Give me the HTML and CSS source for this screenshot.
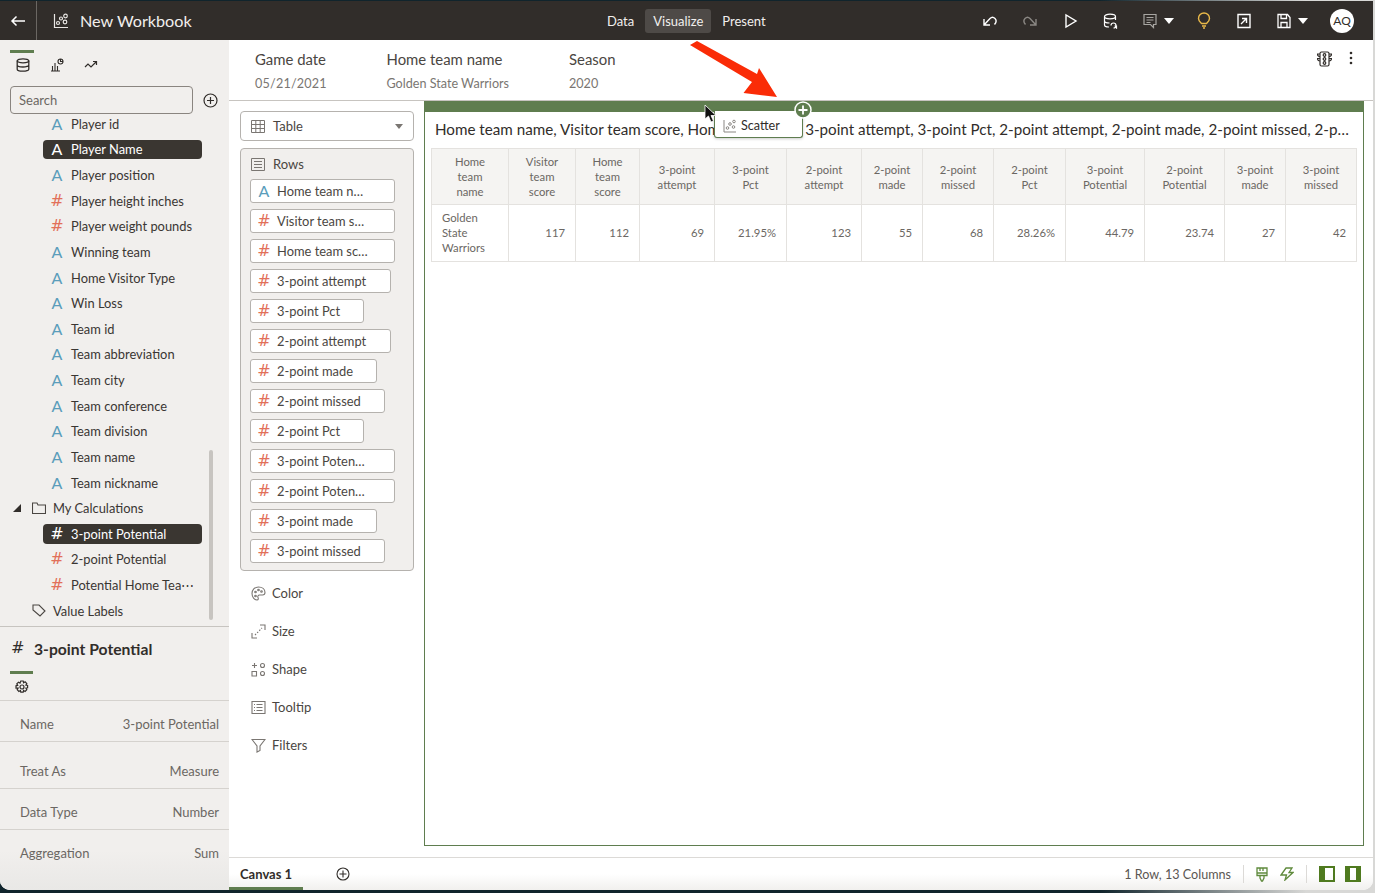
FILE: index.html
```html
<!DOCTYPE html>
<html lang="en">
<head>
  <meta charset="UTF-8" />
  <title>New Workbook</title>
  <link rel="stylesheet" href="styles.css">
</head>
<body>
<div class="window">
  <header class="topbar">
    <div class="back">
      <svg width="16" height="12" viewBox="0 0 16 12" fill="none" stroke="#fff" stroke-width="1.5"><path d="M15 6H2M6.500 1.500 2 6l4.500 4.500"/></svg>
    </div>
    <svg class="wb-icon" width="16" height="16" viewBox="0 0 16 16" fill="none" stroke="#e8e6e3" stroke-width="1.2"><path d="M1.500 1v13.500H15"/><circle cx="5" cy="10" r="1.500"/><circle cx="8" cy="5.500" r="1.500"/><circle cx="12.500" cy="3" r="1.800"/><circle cx="12" cy="9" r="1.800"/></svg>
    <span class="wb-title">New Workbook</span>
    <nav class="modes">
      <span class="mode">Data</span>
      <span class="mode mode-on">Visualize</span>
      <span class="mode">Present</span>
    </nav>
    <div class="tools">
      <svg width="16" height="16" viewBox="0 0 16 16" fill="none" stroke="#fff" stroke-width="1.400"><path d="M2 6v6h6M2.500 11.500 8 5.500c1.500-1.500 3.500-1.500 5 0s1.200 4-.5 6"/></svg>
      <svg width="16" height="16" viewBox="0 0 16 16" fill="none" stroke="#8a8783" stroke-width="1.400"><path d="M14 6v6H8M13.500 11.500 8 5.500C6.500 4 4.500 4 3 5.500s-1.200 4 .5 6"/></svg>
      <svg width="16" height="16" viewBox="0 0 16 16" fill="none" stroke="#fff" stroke-width="1.400"><path d="M4 2v12l10-6z"/></svg>
      <svg width="16" height="16" viewBox="0 0 16 16" fill="none" stroke="#fff" stroke-width="1.200"><ellipse cx="8" cy="3.500" rx="5.500" ry="2.300"/><path d="M2.500 3.500V12c0 1.200 2 2 4.500 2M13.500 3.500V7M2.500 8c0 1.200 2.500 2 5 2"/><path d="M9 12.500a2.500 2.500 0 1 1 2.500 2.500M13.500 14l1 1v-2h-2"/></svg>
      <span class="tool-group tool-comment">
        <svg width="16" height="16" viewBox="0 0 16 16" fill="none" stroke="#a8a6a2" stroke-width="1.200"><path d="M2 1.500h12v10h-2.500v3l-3-3H2zM4.500 4.500h7M4.500 7h7M4.500 9.500h4"/></svg>
        <i class="caret-w"></i>
      </span>
      <svg width="16" height="17" viewBox="0 0 16 17" fill="none" stroke="#e9b949" stroke-width="1.400"><path d="M5.500 11.500C4 10 2.500 8.800 2.500 6.500a5.500 5.500 0 0 1 11 0c0 2.300-1.500 3.500-3 5zM6 14h4M7 16h2"/></svg>
      <svg width="16" height="16" viewBox="0 0 16 16" fill="none" stroke="#fff" stroke-width="1.400"><path d="M2 1.500h12v13H2zM5 11l5.500-5.500M6 5.500h4.500V10"/></svg>
      <span class="tool-group tool-save">
        <svg width="16" height="16" viewBox="0 0 16 16" fill="none" stroke="#fff" stroke-width="1.300"><path d="M2 1.500h9.500l2.500 3v10H2zM5 1.500v4h5.500v-4M5 14.500v-5h6v5"/></svg>
        <i class="caret-w"></i>
      </span>
      <span class="avatar">AQ</span>
    </div>
  </header>

  <div class="main">
    <aside class="sidebar">
      <div class="side-tabs">
        <span class="side-tab side-tab-on">
          <svg width="14" height="14" viewBox="0 0 14 14" fill="none" stroke="#312d2a" stroke-width="1.300"><ellipse cx="7" cy="2.800" rx="5.800" ry="2"/><path d="M1.200 2.800v8.400c0 1.100 2.600 2 5.800 2s5.800-.9 5.800-2V2.800M1.200 7c0 1.100 2.600 2 5.800 2s5.800-.9 5.800-2"/></svg>
        </span>
        <span class="side-tab">
          <svg width="14" height="14" viewBox="0 0 14 14" fill="none" stroke="#312d2a" stroke-width="1.100"><path d="M1 13h9M2.500 13V8M5 13V5M7.500 13V8"/><circle cx="10.500" cy="3.500" r="2.500"/><path d="M10.500 1v2.500H13"/></svg>
        </span>
        <span class="side-tab">
          <svg width="14" height="14" viewBox="0 0 14 14" fill="none" stroke="#312d2a" stroke-width="1.200"><path d="M1 9l3-3 3 3 5-5M9 3.500h3.500V7"/></svg>
        </span>
      </div>
      <div class="search-row">
        <div class="search">Search</div>
        <svg width="15" height="15" viewBox="0 0 15 15" fill="none" stroke="#312d2a" stroke-width="1.200"><circle cx="7.500" cy="7.500" r="6.500"/><path d="M7.500 4v7M4 7.500h7"/></svg>
      </div>
      <div class="field-list">
        <div class="field"><span class="ico-a">A</span><span class="field-name">Player id</span></div>
        <div class="field field-sel"><span class="ico-a">A</span><span class="field-name">Player Name</span></div>
        <div class="field"><span class="ico-a">A</span><span class="field-name">Player position</span></div>
        <div class="field"><span class="ico-h">#</span><span class="field-name">Player height inches</span></div>
        <div class="field"><span class="ico-h">#</span><span class="field-name">Player weight pounds</span></div>
        <div class="field"><span class="ico-a">A</span><span class="field-name">Winning team</span></div>
        <div class="field"><span class="ico-a">A</span><span class="field-name">Home Visitor Type</span></div>
        <div class="field"><span class="ico-a">A</span><span class="field-name">Win Loss</span></div>
        <div class="field"><span class="ico-a">A</span><span class="field-name">Team id</span></div>
        <div class="field"><span class="ico-a">A</span><span class="field-name">Team abbreviation</span></div>
        <div class="field"><span class="ico-a">A</span><span class="field-name">Team city</span></div>
        <div class="field"><span class="ico-a">A</span><span class="field-name">Team conference</span></div>
        <div class="field"><span class="ico-a">A</span><span class="field-name">Team division</span></div>
        <div class="field"><span class="ico-a">A</span><span class="field-name">Team name</span></div>
        <div class="field"><span class="ico-a">A</span><span class="field-name">Team nickname</span></div>
        <div class="folder">
          <i class="tree-caret"></i>
          <svg width="14" height="12" viewBox="0 0 14 12" fill="none" stroke="#4a4642" stroke-width="1.100"><path d="M.5 1h4.500l1 2h7.500v8.500H.5z"/></svg>
          <span>My Calculations</span>
        </div>
        <div class="field field-sel"><span class="ico-h">#</span><span class="field-name">3-point Potential</span></div>
        <div class="field"><span class="ico-h">#</span><span class="field-name">2-point Potential</span></div>
        <div class="field"><span class="ico-h">#</span><span class="field-name">Potential Home Tea&#8943;</span></div>
        <div class="folder">
          <i class="tree-blank"></i>
          <svg width="14" height="13" viewBox="0 0 14 13" fill="none" stroke="#4a4642" stroke-width="1.100"><path d="M1 1h6l6 6-5 5-7-6z"/></svg>
          <span>Value Labels</span>
        </div>
        <div class="list-scroll"></div>
      </div>
      <div class="props">
        <div class="props-title"><span class="props-hash">#</span><span>3-point Potential</span></div>
        <div class="props-tab">
          <svg width="14" height="14" viewBox="0 0 14 14" fill="none" stroke="#312d2a" stroke-width="1.200"><circle cx="7" cy="7" r="2"/><path d="M5.800 1h2.400l.4 1.700 1.500-.9 1.700 1.700-.9 1.500 1.700.4v2.400l-1.700.4.900 1.500-1.700 1.700-1.500-.9-.4 1.700H5.800l-.4-1.700-1.500.9-1.700-1.700.9-1.500L1 8.200V5.800l1.700-.4-.9-1.500 1.700-1.700 1.500.9z"/></svg>
        </div>
        <div class="prop"><span>Name</span><span>3-point Potential</span></div>
        <div class="prop prop-treat"><span>Treat As</span><span>Measure</span></div>
        <div class="prop"><span>Data Type</span><span>Number</span></div>
        <div class="prop prop-last"><span>Aggregation</span><span>Sum</span></div>
      </div>
    </aside>

    <section class="content">
      <div class="filter-bar">
        <div class="filter filter-date"><div class="filter-label">Game date</div><div class="filter-value">05/21/2021</div></div>
        <div class="filter filter-team"><div class="filter-label">Home team name</div><div class="filter-value">Golden State Warriors</div></div>
        <div class="filter"><div class="filter-label">Season</div><div class="filter-value">2020</div></div>
        <div class="filter-tools">
          <svg width="15" height="16" viewBox="0 0 15 16" fill="none" stroke="#312d2a" stroke-width="1.200"><rect x="3" y="1" width="9" height="14" rx="1.500"/><path d="M3 3H.5c0 1.500 1 2.500 2.500 2.500M12 3h2.500c0 1.500-1 2.500-2.500 2.500M3 7.500H.5c0 1.500 1 2.500 2.500 2.500M12 7.500h2.500c0 1.500-1 2.500-2.500 2.500"/><circle cx="7.500" cy="4" r="1.300"/><circle cx="7.500" cy="8" r="1.300"/><circle cx="7.500" cy="12" r="1.300"/></svg>
          <svg width="4" height="14" viewBox="0 0 4 14" fill="#312d2a"><circle cx="2" cy="2" r="1.300"/><circle cx="2" cy="7" r="1.300"/><circle cx="2" cy="12" r="1.300"/></svg>
        </div>
      </div>

      <div class="work">
        <div class="grammar">
          <div class="viz-select">
            <svg width="14" height="13" viewBox="0 0 14 13" fill="none" stroke="#7a7672" stroke-width="1"><path d="M.5.500h13v12H.5zM.5 4.500h13M.5 8.500h13M4.800.500v12M9.200.500v12"/></svg>
            <span>Table</span>
            <i class="caret-g"></i>
          </div>
          <div class="rows-box">
            <div class="rows-head">
              <svg width="14" height="13" viewBox="0 0 14 13" fill="none" stroke="#7a7672" stroke-width="1"><path d="M.5.500h13v12H.5zM3 3.500h8M3 6.500h8M3 9.500h8"/></svg>
              <span>Rows</span>
            </div>
            <div class="pill pill-l"><span class="ico-a">A</span>Home team n&#8230;</div>
            <div class="pill pill-l"><span class="ico-h">#</span>Visitor team s&#8230;</div>
            <div class="pill pill-l"><span class="ico-h">#</span>Home team sc&#8230;</div>
            <div class="pill pill-m"><span class="ico-h">#</span>3-point attempt</div>
            <div class="pill pill-xs"><span class="ico-h">#</span>3-point Pct</div>
            <div class="pill pill-m"><span class="ico-h">#</span>2-point attempt</div>
            <div class="pill pill-s"><span class="ico-h">#</span>2-point made</div>
            <div class="pill pill-n"><span class="ico-h">#</span>2-point missed</div>
            <div class="pill pill-xs"><span class="ico-h">#</span>2-point Pct</div>
            <div class="pill pill-l"><span class="ico-h">#</span>3-point Poten&#8230;</div>
            <div class="pill pill-l"><span class="ico-h">#</span>2-point Poten&#8230;</div>
            <div class="pill pill-s"><span class="ico-h">#</span>3-point made</div>
            <div class="pill pill-n"><span class="ico-h">#</span>3-point missed</div>
          </div>
          <div class="slot">
            <svg width="15" height="15" viewBox="0 0 15 15" fill="none" stroke="#7a7672" stroke-width="1.100"><path d="M7.500 1C3.500 1 1 4 1 7.500S3.500 14 6 14c1.500 0 1.500-1.500 1-2.500s0-2.500 1.500-2.500h3c1.500 0 2.500-1 2.500-2.500C14 3 11 1 7.500 1z"/><circle cx="4.500" cy="6" r=".8"/><circle cx="7.500" cy="4" r=".8"/><circle cx="10.500" cy="5.500" r=".8"/><circle cx="4.500" cy="10" r=".8"/></svg>
            <span>Color</span>
          </div>
          <div class="slot">
            <svg width="15" height="15" viewBox="0 0 15 15" fill="none" stroke="#7a7672" stroke-width="1.100"><path d="M1 9v5h5M9 1h5v5" /><path d="M4 11l7-7" stroke-dasharray="1.500 1.500"/></svg>
            <span>Size</span>
          </div>
          <div class="slot">
            <svg width="15" height="15" viewBox="0 0 15 15" fill="none" stroke="#7a7672" stroke-width="1.100"><path d="M3.500 1v5M1 3.500h5M1 9.500h4.500V14H1z"/><circle cx="11.500" cy="3.500" r="2"/><circle cx="11.500" cy="11.500" r="2"/></svg>
            <span>Shape</span>
          </div>
          <div class="slot">
            <svg width="15" height="15" viewBox="0 0 15 15" fill="none" stroke="#7a7672" stroke-width="1.100"><path d="M1 1.500h13v12H1zM5.500 4.500h6M5.500 7.500h6M5.500 10.500h6M3 4.500h1M3 7.500h1M3 10.500h1"/></svg>
            <span>Tooltip</span>
          </div>
          <div class="slot">
            <svg width="15" height="15" viewBox="0 0 15 15" fill="none" stroke="#7a7672" stroke-width="1.100"><path d="M1 1.500h13L9 8v4.500L6 14V8z"/></svg>
            <span>Filters</span>
          </div>
        </div>

        <div class="canvas-wrap">
          <div class="viz">
            <div class="viz-bar"></div>
            <div class="viz-title">Home team name, Visitor team score, Hom<span class="title-tuck">e team score, </span>3-point attempt, 3-point Pct, 2-point attempt, 2-point made, 2-point missed, 2-p&#8230;</div>
            <table class="data-table">
              <colgroup>
                <col class="c1"><col class="c2"><col class="c3"><col class="c4"><col class="c5"><col class="c6"><col class="c7"><col class="c8"><col class="c9"><col class="c10"><col class="c11"><col class="c12"><col class="c13">
              </colgroup>
              <thead>
                <tr>
                  <th>Home<br>team<br>name</th><th>Visitor<br>team<br>score</th><th>Home<br>team<br>score</th><th>3-point<br>attempt</th><th>3-point<br>Pct</th><th>2-point<br>attempt</th><th>2-point<br>made</th><th>2-point<br>missed</th><th>2-point<br>Pct</th><th>3-point<br>Potential</th><th>2-point<br>Potential</th><th>3-point<br>made</th><th>3-point<br>missed</th>
                </tr>
              </thead>
              <tbody>
                <tr>
                  <td class="txt">Golden<br>State<br>Warriors</td><td>117</td><td>112</td><td>69</td><td>21.95%</td><td>123</td><td>55</td><td>68</td><td>28.26%</td><td>44.79</td><td>23.74</td><td>27</td><td>42</td>
                </tr>
              </tbody>
            </table>
          </div>
        </div>
      </div>

      <footer class="footer">
        <div class="canvas-tab">Canvas 1</div>
        <svg class="add-canvas" width="14" height="14" viewBox="0 0 14 14" fill="none" stroke="#312d2a" stroke-width="1.100"><circle cx="7" cy="7" r="6"/><path d="M7 3.500v7M3.500 7h7"/></svg>
        <div class="foot-right">
          <span class="foot-count">1 Row, 13 Columns</span>
          <span class="foot-sep"></span>
          <svg width="12" height="15" viewBox="1 0 12 15" fill="none" stroke="#5f8a3c" stroke-width="1.300"><path d="M2 1h10v7.500H2zM2 6h10M5 1v3M8 1v3M5 8.500V11l1.500 3h1L9 11V8.500"/></svg>
          <svg width="14" height="14" viewBox="0 0 14 14" fill="none" stroke="#5f8a3c" stroke-width="1.300"><path d="M6 1h6L9 5.500h4L5 13l1.500-5H1z"/></svg>
          <span class="foot-sep"></span>
          <span class="panel-btn panel-left"></span>
          <span class="panel-btn panel-mid"></span>
        </div>
      </footer>
    </section>
  </div>

  <svg class="red-arrow" width="90" height="60" viewBox="0 0 90 60"><path d="M8 1 68 34 70 28 88 57 54.500 53 63 42 1 5z" fill="#fa2c07"/></svg>
  <div class="drag-tip">
    <svg width="14" height="14" viewBox="0 0 14 14" fill="none" stroke="#8a8783" stroke-width="1"><path d="M1 1v12h12"/><circle cx="4.500" cy="9" r="1.300"/><circle cx="7" cy="5" r="1.300"/><circle cx="11" cy="2.500" r="1.300"/><circle cx="10.500" cy="8" r="1.300"/></svg>
    <span>Scatter</span>
  </div>
  <svg class="drop-plus" width="18" height="18" viewBox="0 0 18 18"><circle cx="9" cy="9" r="8" fill="#5f7d4f" stroke="#fff" stroke-width="1.500"/><path d="M9 4.500v9M4.500 9h9" stroke="#fff" stroke-width="1.800"/></svg>
  <svg class="cursor" width="13" height="19" viewBox="0 0 13 19"><path d="M1 1v14l3.500-3 2.500 6 2.500-1-2.500-5.500H12z" fill="#111" stroke="#fff" stroke-width=".8"/></svg>
</div>
</body>
</html>
```

FILE: styles.css
```css
* {
  box-sizing: border-box;
}

html, body {
  margin: 0;
  height: 100%;
}

body {
  background: linear-gradient(90deg, #10242c 80%, #d8d8d6 95%);
  font-family: Lato, "Noto Sans", sans-serif;
  color: #312d2a;
  overflow: hidden;
}

.window {
  position: relative;
  width: 1373px;
  height: 889px;
  margin-top: 1px;
  background: #fff;
  border-radius: 0 0 10px 10px;
  overflow: hidden;
}

/* top bar */
.topbar {
  height: 39px;
  background: #312d2a;
  color: #fff;
  display: flex;
  align-items: center;
}

.back {
  width: 37px;
  height: 39px;
  border-right: 1px solid #6b6763;
  display: flex;
  align-items: center;
  justify-content: center;
}

.wb-icon {
  margin-left: 16px;
}

.wb-title {
  margin-left: 11px;
  font-size: 16.200px;
  color: #f1efed;
  width: 200px;
}

.modes {
  display: flex;
  margin-left: 319px;
  gap: 3px;
}

.mode {
  font-size: 13px;
  height: 24px;
  line-height: 24px;
  padding: 0 8px;
  border-radius: 3px;
  color: #f1efed;
}

.mode-on {
  background: #4e4a47;
}

.tools {
  margin-left: auto;
  margin-right: 19px;
  display: flex;
  align-items: center;
  gap: 24px;
}

.tool-group {
  display: flex;
  align-items: center;
  gap: 6px;
}

.tool-comment,
.tool-save {
  margin-right: -2px;
}

.caret-w {
  width: 0;
  height: 0;
  border-left: 5px solid transparent;
  border-right: 5px solid transparent;
  border-top: 6px solid #fff;
}

.avatar {
  width: 24px;
  height: 24px;
  border-radius: 50%;
  background: #fff;
  color: #312d2a;
  font-size: 12px;
  text-align: center;
  line-height: 24px;
}

.main {
  display: flex;
  height: 850px;
}

/* left panel */
.sidebar {
  width: 229px;
  background: #f1efed;
  display: flex;
  flex-direction: column;
  flex-shrink: 0;
}

.side-tabs {
  display: flex;
  padding: 10px 0 0 10px;
  gap: 10px;
  height: 46px;
}

.side-tab {
  width: 24px;
  height: 28px;
  border-top: 3px solid transparent;
  display: flex;
  justify-content: center;
  padding: 5px 0 0 2px;
}

.side-tab-on {
  border-top-color: #5f7d4f;
}

.search-row {
  display: flex;
  align-items: center;
  padding-left: 10px;
  gap: 10px;
  height: 28px;
}

.search {
  width: 183px;
  height: 28px;
  border: 1px solid #8a8580;
  border-radius: 4px;
  font-size: 13px;
  line-height: 26px;
  padding-left: 8px;
  color: #6b6763;
}

.field-list {
  position: relative;
  height: 512px;
  overflow: hidden;
}

/* the list is scrolled a little in the shot */
.field:first-child {
  margin-top: -3px;
}

.field {
  height: 25.630px;
  margin-left: 43px;
  width: 159px;
  display: flex;
  align-items: center;
  font-size: 12.900px;
  color: #3a3633;
}

.field-sel .field-name {
  color: #fff;
}

.field-sel {
  position: relative;
  color: #fff;
  z-index: 0;
}

.field-sel::before {
  content: "";
  position: absolute;
  inset: 3px 0;
  background: #3a3631;
  border-radius: 4px;
  z-index: -1;
}

.field-sel .ico-a, .field-sel .ico-h {
  color: #fff;
}

.ico-a, .ico-h {
  width: 28px;
  text-align: center;
  flex-shrink: 0;
  line-height: 1;
}

.ico-a {
  font-size: 16px;
  color: #5b9dbb;
}

.ico-h {
  font-family: "DejaVu Sans", sans-serif;
  font-size: 16px;
  color: #e2705a;
}

.folder {
  height: 25.630px;
  display: flex;
  align-items: center;
  padding-left: 13px;
  font-size: 12.900px;
  color: #3a3633;
}

.folder span {
  margin-left: 7px;
}

.tree-caret {
  width: 0;
  height: 0;
  border-left: 8px solid transparent;
  border-bottom: 8px solid #312d2a;
  margin-right: 11px;
}

.tree-blank {
  width: 8px;
  margin-right: 11px;
}

.list-scroll {
  position: absolute;
  left: 209px;
  top: 336px;
  width: 4px;
  height: 170px;
  background: #c7c4c0;
  border-radius: 2px;
}

.props {
  flex: 1;
  border-top: 1px solid #c7c4c0;
  background: linear-gradient(#f1efed 85%, #e9e8e6);
}

.props-title {
  height: 44px;
  display: flex;
  align-items: center;
  font-size: 15.700px;
  font-weight: 700;
  padding: 0 0 0 11px;
}

.props-hash {
  width: 23px;
  font-family: "DejaVu Sans", sans-serif;
  font-size: 16px;
  margin-top: -3px;
  font-weight: 400;
}

.props-tab {
  width: 23px;
  margin-left: 10px;
  height: 29px;
  border-top: 3px solid #5f7d4f;
  display: flex;
  justify-content: center;
  padding-top: 6px;
}

.prop {
  display: flex;
  justify-content: space-between;
  align-items: center;
  padding: 6px 10px 0 20px;
  height: 41px;
  font-size: 13px;
  color: #6b6763;
  border-top: 1px solid #d5d2ce;
}

.prop-treat {
  height: 47px;
  padding-top: 12px;
}

.prop-last {
  height: 46px;
  padding-top: 0;
}

/* content area */
.content {
  flex: 1;
  display: flex;
  flex-direction: column;
  min-width: 0;
}

.filter-bar {
  height: 61px;
  border-bottom: 1px solid #c7c4c0;
  display: flex;
  padding-left: 26px;
  flex-shrink: 0;
}

.filter {
  padding-top: 10px;
}

.filter-date {
  width: 131.500px;
}

.filter-date .filter-value {
  letter-spacing: .2px;
}

.filter-team {
  width: 182.500px;
}

.filter-label {
  font-size: 14.900px;
  color: #4a4642;
  line-height: 18px;
}

.filter-value {
  font-size: 12.600px;
  color: #7a7672;
  margin-top: 8px;
}

.filter-tools {
  margin-left: auto;
  margin-right: 20px;
  padding-top: 11px;
  display: flex;
  gap: 17px;
  align-items: flex-start;
}

.work {
  flex: 1;
  display: flex;
  min-height: 0;
}

.grammar {
  width: 195px;
  padding: 10px 10px 0 11px;
  flex-shrink: 0;
}

.viz-select {
  height: 30px;
  border: 1px solid #b5b2ae;
  border-radius: 4px;
  display: flex;
  align-items: center;
  padding-left: 10px;
  font-size: 13px;
  color: #4a4642;
  gap: 8px;
}

.caret-g {
  margin-left: auto;
  margin-right: 10px;
  border-left: 4px solid transparent;
  border-right: 4px solid transparent;
  border-top: 5px solid #7a7672;
}

.rows-box {
  margin: 7px 0 3px;
  height: 423px;
  background: #f1efed;
  border: 1px solid #b5b2ae;
  border-radius: 4px;
  padding: 0 0 0 9px;
}

.rows-head {
  height: 30px;
  display: flex;
  align-items: center;
  gap: 8px;
  padding-left: 1px;
  font-size: 13px;
  color: #4a4642;
}

.pill {
  height: 24px;
  margin-bottom: 6px;
  background: #fff;
  border: 1px solid #b5b2ae;
  border-radius: 3px;
  display: flex;
  align-items: center;
  font-size: 12.900px;
  color: #4a4642;
  white-space: nowrap;
}

.pill .ico-a, .pill .ico-h {
  width: 26px;
}

.pill-l { width: 145px; }
.pill-m { width: 141px; }
.pill-n { width: 135px; }
.pill-s { width: 127px; }
.pill-xs { width: 114px; }

.slot {
  height: 38px;
  display: flex;
  align-items: center;
  gap: 6px;
  padding-left: 11px;
  font-size: 13px;
  color: #4a4642;
}

.canvas-wrap {
  flex: 1;
  padding-right: 9px;
  padding-bottom: 11px;
}

.viz {
  height: 100%;
  border: 1px solid #5f7d4f;
  border-top: 0;
}

.viz-bar {
  height: 11px;
  background: #5f7d4f;
  margin: 0 -1px;
}

.viz-title {
  font-size: 15.200px;
  line-height: 18px;
  padding: 8px 0 0 10px;
  color: #312d2a;
  white-space: nowrap;
  overflow: hidden;
}

/* hidden under the drag tip, tightened so the rest lines up */
.title-tuck {
  letter-spacing: -.5px;
}

.data-table {
  margin: 10px 0 0 6px;
  width: 925px;
  table-layout: fixed;
  border-collapse: collapse;
  font-size: 11.300px;
  color: #6b6763;
  line-height: 15px;
}

.c1 { width: 77px; }
.c2 { width: 67px; }
.c3 { width: 64px; }
.c4 { width: 75px; }
.c5 { width: 72px; }
.c6 { width: 75px; }
.c7 { width: 61px; }
.c8 { width: 71px; }
.c9 { width: 72px; }
.c10 { width: 79px; }
.c11 { width: 80px; }
.c12 { width: 61px; }
.c13 { width: 71px; }

.data-table th, .data-table td {
  border: 1px solid #e4e2df;
  padding: 0 10px;
  font-weight: 400;
}

.data-table th {
  background: #f5f4f2;
  text-align: center;
  height: 56px;
}

.data-table td {
  text-align: right;
  height: 57px;
  padding-bottom: 2px;
}

.data-table td.txt {
  text-align: left;
}

/* bottom strip */
.footer {
  height: 33px;
  flex-shrink: 0;
  border-top: 1px solid #dcdad7;
  background: linear-gradient(#fff 50%, #f1f0ee);
  display: flex;
  align-items: center;
}

.canvas-tab {
  width: 74px;
  height: 32px;
  padding: 8px 0 0 11px;
  font-size: 13px;
  font-weight: 700;
  border-bottom: 3px solid #5f7d4f;
}

.add-canvas {
  margin-left: 33px;
}

.foot-right {
  margin-left: auto;
  margin-right: 12px;
  display: flex;
  align-items: center;
  gap: 12px;
}

.foot-count {
  font-size: 12.600px;
  color: #5a5652;
}

.foot-sep {
  width: 1px;
  height: 18px;
  background: #dcdad7;
}

.panel-btn {
  width: 16px;
  height: 16px;
  border: 2px solid #4f7a1f;
}

.panel-left {
  border-left-width: 6px;
}

.panel-mid {
  border-left-width: 5px;
  border-right-width: 5px;
  margin-left: -2px;
}

/* drag overlay */
.red-arrow {
  position: absolute;
  left: 689px;
  top: 39px;
}

.drag-tip {
  position: absolute;
  left: 714px;
  top: 110px;
  width: 89px;
  height: 27px;
  background: #fff;
  border: 1.500px solid #5f7d4f;
  border-top: 0;
  border-radius: 0 0 3px 3px;
  display: flex;
  align-items: center;
  gap: 4px;
  padding: 3px 0 0 8px;
  font-size: 12.600px;
  color: #312d2a;
  box-shadow: 0 1px 3px rgba(0, 0, 0, .2);
}

.drop-plus {
  position: absolute;
  left: 794px;
  top: 100px;
}

.cursor {
  position: absolute;
  left: 704px;
  top: 103px;
}
```
